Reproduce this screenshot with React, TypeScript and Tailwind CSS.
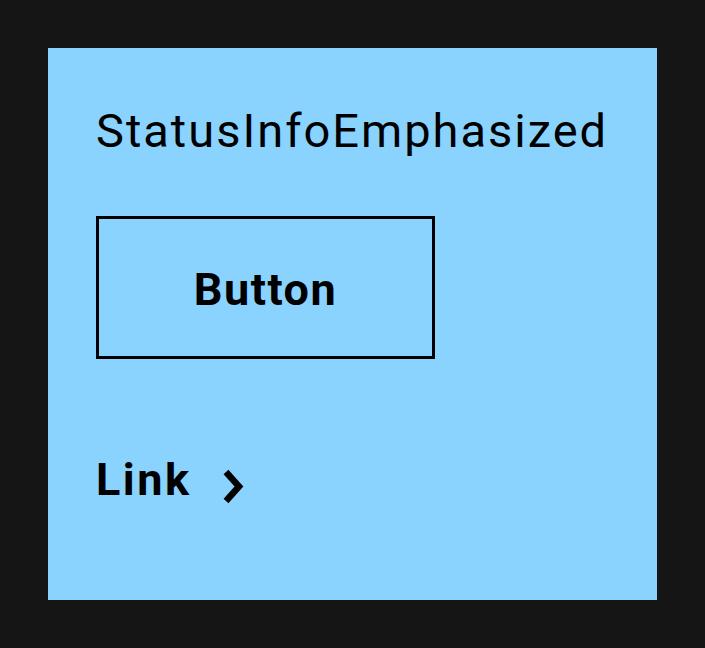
export default function App() {
  return (
    <div className="min-h-[648px] w-full bg-[#151515] p-12 font-['Roboto',sans-serif] text-black">
      <div className="flex w-[609px] flex-col items-start bg-[#89d3fe] px-12 pt-12 pb-[96px]">
        <h1 className="text-[47px] leading-[70px] font-normal tracking-[2px]">StatusInfoEmphasized</h1>
        <button
          type="button"
          className="mt-[50px] flex h-[143px] w-[339px] items-center justify-center border-[3px] border-black pt-[5px] text-[45px] font-bold tracking-[1.5px]"
        >
          Button
        </button>
        <a href="#" className="mt-[98px] flex items-start gap-[31px] text-[45px] leading-none font-bold tracking-[2.5px]">
          Link
          <svg className="mt-[12px]" width="22" height="35" viewBox="0 0 22 35" fill="none">
            <path d="M3 3 L16 17.5 L3 32" stroke="black" strokeWidth="6.5" />
          </svg>
        </a>
      </div>
    </div>
  );
}
